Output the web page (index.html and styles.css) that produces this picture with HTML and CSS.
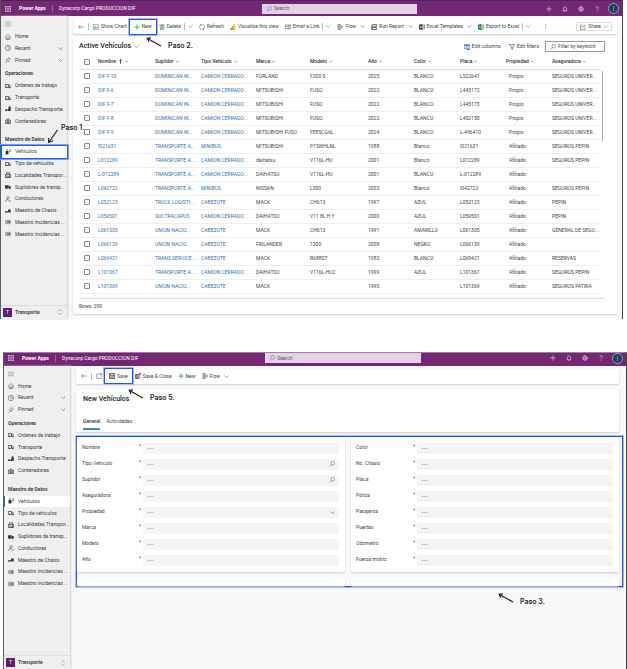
FILE: index.html
```html
<!DOCTYPE html>
<html lang="es">
<head>
<meta charset="utf-8">
<meta name="viewport" content="width=device-width, initial-scale=1">
<title>Power Apps - Vehículos</title>
<link rel="stylesheet" href="styles.css">
<script src="app.js" defer></script>
</head>
<body>
<svg class="sprite" aria-hidden="true">
  <symbol id="waffle" viewBox="0 0 12 12"><path fill="currentColor" d="M0 0h3v3H0zM4.5 0h3v3h-3zM9 0h3v3H9zM0 4.500h3v3H0zM4.500 4.500h3v3h-3zM9 4.500h3v3H9zM0 9h3v3H0zM4.500 9h3v3h-3zM9 9h3v3H9z"/></symbol>
  <symbol id="menu" viewBox="0 0 12 12"><path d="M0 2.500h12M0 6h12M0 9.500h12"/></symbol>
  <symbol id="home" viewBox="0 0 12 12"><path d="M.5 6.500 6 1l5.500 5.500M2 5.500V11h3V7.500h2V11h3V5.500"/></symbol>
  <symbol id="clock" viewBox="0 0 12 12"><circle cx="6" cy="6" r="5.300"/><path d="M6 2.500V6.500h3"/></symbol>
  <symbol id="pin" viewBox="0 0 12 12"><path d="m7.500 1 3.500 3.500-1.500.5L7.500 7 7 9.500 2.500 5 5 4.500l2-2zM4.500 7.500.5 11.500"/></symbol>
  <symbol id="down" viewBox="0 0 12 12"><path d="m1 3.500 5 5 5-5"/></symbol>
  <symbol id="updown" viewBox="0 0 12 12"><path d="M2.500 4.500 6 1l3.500 3.500M2.500 7.500 6 11l3.500-3.500"/></symbol>
  <symbol id="van" viewBox="0 0 12 12"><path stroke-width="1.500" d="M.5 3h6.500v5.500H.5zM7 4.500h2.500l2 2v2H7"/><g fill="currentColor"><circle cx="3" cy="9" r="1.300"/><circle cx="9" cy="9" r="1.300"/></g></symbol>
  <symbol id="forklift" viewBox="0 0 12 12"><path fill="currentColor" d="M7 1h4.500v9H5V6h2zM0 7h4v3H0z"/></symbol>
  <symbol id="box" viewBox="0 0 12 12"><path stroke-width="1.400" d="M.7 4.500h10.600V11H.7zM3 4.500 6 1l3 3.500M3 7h6M3 9h6"/></symbol>
  <symbol id="fleet" viewBox="0 0 12 12"><path fill="currentColor" d="M1 4h6v7H1z"/><circle cx="4" cy="2" r="1.500" fill="currentColor"/><path d="M8 1.500h3.500v4H8M9 3.500h2"/></symbol>
  <symbol id="town" viewBox="0 0 12 12"><path stroke-width="1.400" d="M1 11V5h10v6zM3 5V1.500h6V5M4 7v4M6.500 7v4M9 7v4"/></symbol>
  <symbol id="truck" viewBox="0 0 12 12"><path fill="currentColor" d="M0 2.500h7.500v6H0zM8 4h2.500L12 6.500v2H8z"/><circle cx="3" cy="9" r="1.500" fill="currentColor"/><circle cx="9" cy="9" r="1.500" fill="currentColor"/></symbol>
  <symbol id="driver" viewBox="0 0 12 12"><circle cx="6" cy="3.500" r="2.500"/><path stroke-width="1.400" d="M1.500 11C2 7.500 4 6.500 6 6.500M6.500 9l2 2 3-3"/></symbol>
  <symbol id="chassis" viewBox="0 0 12 12"><path fill="currentColor" d="M0 6.500h6V3h5.500v6H0z"/></symbol>
  <symbol id="ticket" viewBox="0 0 12 12"><rect x=".7" y="2.700" width="10.600" height="6.600" rx="2"/><path stroke-width="1.600" d="M2.500 6h2M5.500 4.500v3M7 5h3M7 7h3"/></symbol>
  <symbol id="search" viewBox="0 0 12 12"><circle cx="7.500" cy="4.500" r="3.700"/><path d="M5 7.500.8 11.500"/></symbol>
  <symbol id="plus" viewBox="0 0 12 12"><path d="M6 .5v11M.5 6h11"/></symbol>
  <symbol id="bell" viewBox="0 0 12 12"><path d="M2 9.500h8L9 8V4.500a3 3 0 0 0-6 0V8zM5 11.200h2"/></symbol>
  <symbol id="gear" viewBox="0 0 12 12"><circle cx="6" cy="6" r="4.300" stroke-width="2" stroke-dasharray="2.200 .5"/><circle cx="6" cy="6" r="1.800"/></symbol>
  <symbol id="help" viewBox="0 0 12 12"><path d="M3.500 3.500C3.500.3 9 .5 9 3.500 9 5.500 6 5.500 6 8.300M6 10v1.500"/></symbol>
  <symbol id="back" viewBox="0 0 12 12"><path d="M11.500 6H1M5 2 1 6l4 4"/></symbol>
  <symbol id="chart" viewBox="0 0 12 12"><rect x=".6" y="1.500" width="10.800" height="9"/><path stroke-width="1.500" d="M3 9V6M5.500 9V4M8 9V5.500"/></symbol>
  <symbol id="trash" viewBox="0 0 12 12"><path d="M1 2.500h10M4.500 2.500V1h3v1.500M2.200 2.500 3 11.300h6l.8-8.800M5 4.500v5M7 4.500v5"/></symbol>
  <symbol id="refresh" viewBox="0 0 12 12"><path d="M4 1.500a5 5 0 0 0 1 9.500M8 10.500A5 5 0 0 0 7 1M2 1h2.500v2.500M10 11H7.500V8.500"/></symbol>
  <symbol id="bi" viewBox="0 0 12 12"><path fill="#f2c94c" d="M7 0h4v12H7z"/><path fill="#e8ad1c" d="M4 4h4v8H4z"/><path fill="#c98a10" d="M1 7.500h4V12H1z"/></symbol>
  <symbol id="mail" viewBox="0 0 12 12"><path d="M.6 2h7v7h-7zM.6 3l3.500 3 3.500-3M7.500 2h4v8h-6V9M9 4.500h1.500"/></symbol>
  <symbol id="flow" viewBox="0 0 12 12"><path stroke-width="1.500" d="M1 1.500h6l4 4.500-4 4.500H1M1 4.500h5L7.500 6 6 7.500H1"/></symbol>
  <symbol id="report" viewBox="0 0 12 12"><path stroke-width="1.400" d="M3 1h8.300v10H3zM.7 3v8h2M5 8.500V5M7 8.500V4M9 8.500V3"/></symbol>
  <symbol id="excel" viewBox="0 0 12 12"><path fill="currentColor" d="M0 1.500 7 0v12L0 10.500z"/><path d="M7 2h4.500v8H7M8 4.500h3M8 7.500h3"/><path stroke="#fff" d="m2 4 3 4M5 4 2 8"/></symbol>
  <symbol id="share" viewBox="0 0 12 12"><path d="M5 2H1v9h9V8M4 8c.5-3 2-4 4.500-4M7.500 1l3.500 3-3.500 3"/></symbol>
  <symbol id="columns" viewBox="0 0 12 12"><path stroke-width="1.300" d="M.6 1.500h10.800v8H.6zM4.200 1.500v8M7.800 1.500v8"/><path stroke-width="2" d="M.6 2.500h10.800M6 11h5"/></symbol>
  <symbol id="funnel" viewBox="0 0 12 12"><path stroke-width="1.500" d="M.8 1h10.400L7.200 6v5l-2.400-1.500V6z"/></symbol>
  <symbol id="window" viewBox="0 0 12 12"><path d="M5 1.500H1.500v9.500h9V7M7 1h4v4M11 1 8 4"/></symbol>
  <symbol id="save" viewBox="0 0 12 12"><path stroke-width="1.500" d="M1 1h10v10H1zM3 1v4h6V1M3.500 11V7.500h5V11"/></symbol>
  <symbol id="saveclose" viewBox="0 0 12 12"><path stroke-width="1.500" d="M1 3h7v8H1zM3 11V7.500h3.500V11M3 3v2.500h3M9 5l2.500-3.500M8 1h3.500v3"/></symbol>
  <symbol id="up" viewBox="0 0 12 12"><path d="M6 11.500V1M3.500 3.500 6 1l2.500 2.500"/></symbol>
  <symbol id="arrow" viewBox="0 0 16 10"><path stroke-width="1.200" d="M15 9 1.500 1.500M5 .8 1.200 1.200 3 4.800"/></symbol>
  <symbol id="arrow-steep" viewBox="0 0 12 15"><path stroke-width="1.200" d="M10.500 1 2 13M1.500 9 1.700 13.500 6 11.800"/></symbol>
</svg>

<section class="shot shot-list" aria-label="Lista de vehículos">
  <header class="top"></header>
  <div class="body">
    <nav class="nav" aria-label="Principal"></nav>
    <main class="main">
      <div class="card toolbar">
        <button class="tool" aria-label="Back"><svg class="i"><use href="#back"/></svg></button>
        <i class="bar"></i>
        <button class="tool"><svg class="i teal"><use href="#chart"/></svg>Show Chart</button>
        <button class="tool marked"><svg class="i green"><use href="#plus"/></svg>New</button>
        <div class="split"><button class="tool"><svg class="i"><use href="#trash"/></svg>Delete</button><i class="bar"></i><button class="tool" aria-label="More delete options"><svg class="c"><use href="#down"/></svg></button></div>
        <button class="tool"><svg class="i"><use href="#refresh"/></svg>Refresh</button>
        <button class="tool"><svg class="i"><use href="#bi"/></svg>Visualize this view</button>
        <div class="split"><button class="tool"><svg class="i"><use href="#mail"/></svg>Email a Link</button><i class="bar"></i><button class="tool" aria-label="More email options"><svg class="c"><use href="#down"/></svg></button></div>
        <button class="tool menu"><svg class="i"><use href="#flow"/></svg>Flow<svg class="c"><use href="#down"/></svg></button>
        <button class="tool menu"><svg class="i"><use href="#report"/></svg>Run Report<svg class="c"><use href="#down"/></svg></button>
        <button class="tool menu"><svg class="i"><use href="#excel"/></svg>Excel Templates<svg class="c"><use href="#down"/></svg></button>
        <div class="split"><button class="tool"><svg class="i excel"><use href="#excel"/></svg>Export to Excel</button><i class="bar"></i><button class="tool" aria-label="More export options"><svg class="c"><use href="#down"/></svg></button></div>
        <button class="tool more" aria-label="More commands">⋮</button>
        <button class="tool share"><svg class="i"><use href="#share"/></svg>Share<svg class="c"><use href="#down"/></svg></button>
      </div>
      <div class="card list">
        <div class="list-head">
          <h1>Active Vehículos</h1><svg class="c"><use href="#down"/></svg>
          <button class="tool push"><svg class="i blue"><use href="#columns"/></svg>Edit columns</button>
          <button class="tool"><svg class="i blue"><use href="#funnel"/></svg>Edit filters</button>
          <label class="filter"><svg class="i"><use href="#search"/></svg><input type="text" aria-label="Filter by keyword" placeholder="Filter by keyword"></label>
        </div>
        <div class="scroller">
          <table>
            <colgroup><col class="w-check"><col class="w-name"><col class="w-std"><col class="w-type"><col class="w-brand"><col class="w-model"><col class="w-std"><col class="w-std"><col class="w-std"><col class="w-std"><col class="w-last"></colgroup>
            <thead><tr></tr></thead>
            <tbody></tbody>
          </table>
          <div class="thumb"></div>
        </div>
        <div class="rows">Rows: 290</div>
      </div>
    </main>
  </div>
  <div class="step step-1"><svg class="arrow-steep"><use href="#arrow-steep"/></svg>Paso 1.</div>
  <div class="step step-2"><svg class="arrow"><use href="#arrow"/></svg>Paso 2.</div>
</section>

<section class="shot shot-form" aria-label="Nuevo vehículo">
  <header class="top"></header>
  <div class="body">
    <nav class="nav" aria-label="Principal"></nav>
    <main class="main">
      <div class="card toolbar">
        <button class="tool" aria-label="Back"><svg class="i"><use href="#back"/></svg></button>
        <i class="bar"></i>
        <button class="tool" aria-label="Open in new window"><svg class="i"><use href="#window"/></svg></button>
        <button class="tool marked"><svg class="i"><use href="#save"/></svg>Save</button>
        <button class="tool"><svg class="i"><use href="#saveclose"/></svg>Save &amp; Close</button>
        <button class="tool"><svg class="i green"><use href="#plus"/></svg>New</button>
        <button class="tool menu"><svg class="i"><use href="#flow"/></svg>Flow<svg class="c"><use href="#down"/></svg></button>
      </div>
      <div class="card title-card">
        <h1>New Vehículos</h1>
        <div class="tabs"><button class="tab active">General</button><button class="tab">Actividades</button></div>
      </div>
      <form class="form marked">
        <div class="card fields" id="left"></div>
        <div class="card fields" id="right"></div>
        <div class="card stub"></div>
        <div class="card stub"></div>
      </form>
    </main>
  </div>
  <div class="step step-5"><svg class="arrow"><use href="#arrow"/></svg>Paso 5.</div>
  <div class="step step-3"><svg class="arrow"><use href="#arrow"/></svg>Paso 3.</div>
</section>
</body>
</html>
```

FILE: app.js
```js
const icon = (name, cls = "i") => `<svg class="${cls}"><use href="#${name}"/></svg>`;

const topBar = `
  <div class="brand"><button class="tool" aria-label="Apps">${icon("waffle")}</button><b>Power Apps</b><i class="bar"></i><span>Dynacorp Cargo PRODUCCION DIF</span></div>
  <label class="search">${icon("search")}<input type="text" aria-label="Search" placeholder="Search"></label>
  <div class="actions">
    ${[["plus", "Add"], ["bell", "Notifications"], ["gear", "Settings"], ["help", "Help"]]
      .map(([n, l]) => `<button class="tool" aria-label="${l}">${icon(n)}</button>`).join("")}
    <button class="avatar" aria-label="Account"></button>
  </div>`;

const groups = [
  [null, [["home", "Home"], ["clock", "Recent", true], ["pin", "Pinned", true]]],
  ["Operaciones", [["van", "Ordenes de trabajo"], ["van", "Transporte"], ["forklift", "Despacho Transporte"], ["box", "Contenedores"]]],
  ["Maestro de Datos", [["fleet", "Vehículos"], ["van", "Tipo de vehículos"], ["town", "Localidades Transpor..."], ["truck", "Suplidores de transp..."],
    ["driver", "Conductores"], ["chassis", "Maestro de Chasis"], ["ticket", "Maestro incidencias ..."], ["ticket", "Maestro incidencias ..."]]],
];

const navHtml = `<button class="tool burger" aria-label="Menu">${icon("menu")}</button>` +
  groups.map(([title, items]) => `${title ? `<h2>${title}</h2>` : ""}<ul class="n${items.length}">${items.map(([n, t, more]) =>
    `<li><a href="#"${t === "Vehículos" ? ' class="current"' : ""}>${icon(n)}<span>${t}</span>${more ? icon("down", "c") : ""}</a></li>`).join("")}</ul>`).join("") +
  `<button class="area"><b class="tile">T</b><b>Transporte</b>${icon("updown")}</button>`;

document.querySelectorAll(".top").forEach(el => { el.innerHTML = topBar; });
document.querySelectorAll(".nav").forEach(el => { el.innerHTML = navHtml; });

const heads = ["Nombre", "Suplidor", "Tipo Vehículo", "Marca", "Modelo", "Año", "Color", "Placa", "Propiedad", "Aseguradora"];
const C = "CAMION CERRADO ...", D = "DOMINICAN IN...", T = "TRANSPORTE A...", U = "UNION NACIO...", S = "SEGUROS UNIVER...", P = "SEGUROS PEPIN";
const rows = [
  ["DIF F-10", D, C, "FORLAND", "F200 S", "2025", "BLANCO", "L522641", "Propio", S],
  ["DIF F-6", D, C, "MITSUBISHI", "FUSO", "2022", "BLANCO", "L445172", "Propio", S],
  ["DIF F-7", D, C, "MITSUBISHI", "FUSO", "2022", "BLANCO", "L445173", "Propio", S],
  ["DIF F-8", D, C, "MITSUBISHI", "FUSO", "2022", "BLANCO", "L452150", "Propio", S],
  ["DIF F-9", D, C, "MITSUBISHI FUSO", "FE85CG6L", "2024", "BLANCO", "L-496410", "Propio", S],
  ["I021631", T, "MINIBUS", "MITSUBISHI", "P15WHLNL", "1988", "Blanco", "I021631", "Afiliado", P],
  ["L012289", T, C, "daihatsu", "V116L-HU", "2001", "Blanco", "L012289", "Afiliado", P],
  ["L-012289", T, C, "DAIHATSU", "V116L-HU", "2001", "BLANCO", "L-012289", "Afiliado", ""],
  ["L042722", T, "MINIBUS", "NISSAN", "L300", "2003", "Blanco", "I042722", "Afiliado", P],
  ["L052123", "TRUCK LOGISTI...", "CABEZOTE", "MACK", "CH613", "1997", "AZUL", "L052123", "Afiliado", "PEPIN"],
  ["L059501", "SUCTRACAPUS", C, "DAIHATSU", "V11 8L H Y", "2000", "AZUL", "L059501", "Afiliado", "PEPIN"],
  ["L061305", U, "CABEZOTE", "MACK", "CH613", "1991", "AMARILLO", "L061305", "Afiliado", "GENERAL DE SEGU..."],
  ["L066139", U, "CABEZOTE", "FRILANDER", "1300", "2008", "NEGRO", "L066139", "Afiliado", ""],
  ["L069421", "TRANS SERVICE...", "CABEZOTE", "MACK", "R688ST", "1985", "BLANCO", "L069421", "Afiliado", "RESERVAS"],
  ["L101367", T, C, "DAIHATSU", "V116L-HU2", "1999", "AZUL", "L101367", "Afiliado", P],
  ["L101369", U, "CABEZOTE", "MACK", "", "1995", "", "L101369", "Afiliado", "SEGUROS PATRIA"],
];
const check = label => `<input type="checkbox" aria-label="${label}">`;
document.querySelector("thead tr").innerHTML = `<th>${check("Select all")}</th>` +
  heads.map((h, i) => `<th scope="col">${h}${i ? "" : icon("up", "c dark")}${icon("down", "c dark")}</th>`).join("");
document.querySelector("tbody").innerHTML = rows.map(r => `<tr><td>${check("Select " + r[0])}</td>` +
  r.map((v, i) => `<td>${i < 3 ? `<a href="#">${v}</a>` : v}</td>`).join("") + "</tr>").join("");

// Each field: label, required marker colour, optional trailing control
const fields = {
  left: [["Nombre", "red"], ["Tipo Vehículo", "red", "search"], ["Suplidor", "red", "search"], ["Aseguradora", "sky"], ["Propiedad", "red", "down"], ["Marca", "sky"], ["Modelo", "sky"], ["Año", "sky"]],
  right: ["Color", "No. Chasis", "Placa", "Póliza", "Pasajeros", "Puertas", "Odometro", "Fuerza motriz"].map(l => [l, "sky"]),
};
Object.entries(fields).forEach(([side, list]) => {
  document.getElementById(side).innerHTML = list.map(([label, mark, end], i) => {
    const id = `${side}-${i}`;
    const control = end === "down" ? `<select id="${id}"><option>---</option></select>` : `<input type="text" id="${id}" placeholder="---">`;
    return `<div class="field"><label for="${id}">${label}</label><span class="${mark}">*</span><div class="control">${control}${end ? icon(end, end === "down" ? "c" : "i") : ""}</div></div>`;
  }).join("");
});
```

FILE: styles.css
```css
* { box-sizing: border-box; }

body {
  margin: 0;
  min-height: 100vh;
  display: flex;
  flex-direction: column;
  gap: 33px;
  background: #fff;
  color: #444;
  font: 5px/7px Roboto, "Open Sans", sans-serif;
}

.sprite { position: absolute; width: 0; height: 0; }
svg { flex: none; fill: none; stroke: currentColor; stroke-width: 1; }
.sprite [fill] { stroke: none; }
.i { width: 6px; height: 6px; }
.c { width: 5px; height: 5px; color: #555; stroke-width: 1.3; }
.dark { color: #333; }
.teal { color: #2f7f86; }
.green { color: #2f9b57; stroke-width: 1.5; }
.excel { color: #188038; }
.blue { color: #2b7cc4; }

button, input, select {
  margin: 0;
  padding: 0;
  border: 0;
  background: none;
  color: inherit;
  font: inherit;
}
input::placeholder { color: inherit; opacity: 1; }
a { color: #2f74b0; text-decoration: none; }
h1, h2 { margin: 0; font-size: inherit; }
h1 { font-size: 7px; line-height: 9px; font-weight: 500; color: #222; }

.shot {
  position: relative;
  display: flex;
  flex-direction: column;
  border-left: 1px solid #555;
  border-right: 1px solid #444;
}
.shot-list { margin-right: 4px; }
.shot-form { margin-left: 3px; flex: 1; }

.top {
  display: grid;
  grid-template-columns: 42% 25% 1fr;
  align-items: center;
  height: 16px;
  border-top: 1px solid #4a2a4c;
  background: #742774;
  color: #fff;
}
.shot-form .top { height: 14px; padding-bottom: 2px; border-top-color: #a77ba8; }
.brand { display: flex; align-items: center; gap: 6px; padding-left: 4px; }
.brand b { margin-left: 2px; }
.brand .bar { background: #a060a0; }
.brand .i { opacity: .7; }
.search {
  display: flex;
  align-items: center;
  gap: 2px;
  height: 10px;
  padding: 0 4px;
  background: #e4d2e4;
  color: #555;
}
.search .i { color: #3c6cc0; }
.search input { flex: 1; min-width: 0; }
.actions { display: flex; align-items: center; justify-content: flex-end; gap: 10px; padding-right: 3px; }
.avatar {
  width: 11px;
  height: 11px;
  margin-left: -2px;
  border: 1px solid #8fa5b5;
  border-radius: 50%;
  background: radial-gradient(ellipse 1px 3px at 50% 50%, #c86b45 90%, transparent), #17435f;
}

.body { flex: 1; display: flex; }
.nav {
  position: relative;
  z-index: 1;
  flex: 0 0 66px;
  min-width: 0;
  width: 66px;
  display: flex;
  flex-direction: column;
  padding-top: 1px;
  background: #efefef;
  box-shadow: 1px 0 2px #ccc;
}
.burger { height: 14px; padding-left: 4px; color: #777; }
.nav h2 { padding-left: 4px; line-height: 14px; font-weight: 600; color: #333; }
.nav ul { display: grid; grid-template-columns: minmax(0, 1fr); grid-auto-rows: 1fr; margin: 0; padding: 0; list-style: none; }
.nav .n3 { height: 35px; }
.nav .n4 { height: 47px; margin-bottom: 5px; }
.nav .n8 { height: 94px; }
.nav a {
  display: flex;
  align-items: center;
  gap: 4px;
  height: 100%;
  padding-left: 4px;
  color: #3a3a3a;
  white-space: nowrap;
}
.nav a .c { margin: 0 4px 0 auto; }
.nav .current { padding-left: 3px; border-left: 1px solid #1672b8; background: #fff; }
.shot-list .current { box-shadow: 0 0 0 1px #1f55f0, 0 0 0 2px #7d9ef8; }
.area {
  display: flex;
  align-items: center;
  gap: 3px;
  height: 14px;
  margin-top: auto;
  padding: 0 4px 0 2px;
  border-top: 1px solid #ddd;
}
.area .i { margin-left: auto; color: #777; }
.tile { width: 9px; line-height: 9px; background: #641a78; color: #fff; font-weight: 400; }

.main {
  flex: 1;
  min-width: 0;
  display: flex;
  flex-direction: column;
  gap: 3px;
  padding: 3px 5px 5px 6px;
  background: #faf9fa;
}
.shot-form .main { padding-right: 7px; }
.card { background: #fff; border-radius: 2px; box-shadow: 0 1px 2px #ccc; }
.toolbar { display: flex; align-items: center; gap: 6px; height: 15px; padding: 0 5px; }
.tool { display: flex; align-items: center; gap: 2px; white-space: nowrap; }
.split { display: flex; align-items: center; gap: 3px; }
.menu .c { margin-left: 2px; }
.bar { width: 1px; height: 7px; background: #bbb; }
.toolbar > .bar { margin: 0 -2px; }
.toolbar .marked {
  height: 14px;
  margin: 0 -3px;
  padding: 0 4px;
}
.marked { box-shadow: 0 0 0 1px #1f55f0, 0 0 0 2px #a3bafa; }
.more { margin-left: 6px; }
.share { margin-left: auto; height: 9px; padding: 0 3px; border: 1px solid #ddd; border-radius: 1px; }

.list { flex: 1; padding: 4px 12px 0 6px; }
.list-head { display: flex; align-items: center; gap: 8px; height: 11px; margin-bottom: 3px; }
.list-head > .c { margin-left: -5px; }
.push { margin-left: auto; }
.filter {
  display: flex;
  align-items: center;
  gap: 2px;
  width: 60px;
  height: 11px;
  margin-left: -2px;
  padding: 0 4px;
  border: 1px solid #999;
}
.filter input { flex: 1; min-width: 0; }

.scroller { display: flex; gap: 2px; padding-right: 2px; }
table { flex: 1; width: 100%; table-layout: fixed; border-collapse: collapse; }
.w-check { width: 19px; }
.w-name { width: 57px; }
.w-std { width: 46px; }
.w-type { width: 55px; }
.w-brand { width: 54px; }
.w-model { width: 58px; }
.w-last { width: 48px; }
th, td {
  height: 14px;
  padding: 0;
  border-bottom: 1px solid #eee;
  text-align: left;
  white-space: nowrap;
}
th { border-color: #ddd; font-weight: 500; color: #333; }
th .c { width: 3px; height: 3px; margin-left: 2px; vertical-align: middle; stroke-width: 2; }
th .c:nth-child(1):not(:last-child) { width: 5px; height: 5px; }
td:nth-child(10) { padding-left: 3px; }
input[type="checkbox"] {
  appearance: none;
  display: block;
  width: 6px;
  height: 6px;
  margin-left: 5px;
  border: 1px solid #888;
  border-radius: 1px;
}
.thumb { width: 2px; height: 70px; margin-top: 16px; background: #aaa; }
.rows { margin-top: 4px; padding: 4px 0; border-top: 1px solid #ddd; }

.title-card { margin-top: 3px; height: 42px; padding: 5px 7px 0; }
.tabs { display: flex; gap: 6px; margin-top: 13px; }
.tab { height: 13px; padding-bottom: 2px; border-bottom: 2px solid transparent; }
.tab.active { border-color: #3c86c8; font-weight: 600; }
.form {
  display: grid;
  grid-template-columns: 1fr 1fr;
  gap: 6px;
  margin: 2px -3px 0 1px;
  padding: 1px 3px 0 0;
}
.fields { padding: 5px 6px 1px 5px; }
.field { display: grid; grid-template-columns: 57px 4px 1fr; height: 16px; }
.field label { line-height: 9px; }
.red, .sky { font-weight: 700; }
.red { color: #e02020; }
.sky { color: #1f86e0; }
.control {
  display: flex;
  align-items: center;
  height: 11px;
  padding: 0 4px;
  border-radius: 1px;
  background: #f4f4f4;
  color: #666;
  font-family: Inter, sans-serif;
}
.control input, .control select { flex: 1; min-width: 0; appearance: none; }
.stub { height: 8px; }

.step {
  position: absolute;
  z-index: 2;
  display: flex;
  align-items: flex-end;
  gap: 6px;
  color: #222;
  font: 600 7px/9px Inter, sans-serif;
}
.arrow { width: 16px; height: 10px; margin-bottom: 3px; }
.arrow-steep { width: 12px; height: 15px; margin-top: 6px; }
.step-1 { left: 46px; top: 123px; gap: 2px; align-items: flex-start; }
.step-2 { left: 145px; top: 37px; }
.step-5 { left: 124px; top: 37px; }
.step-3 { left: 494px; top: 241px; }
```
